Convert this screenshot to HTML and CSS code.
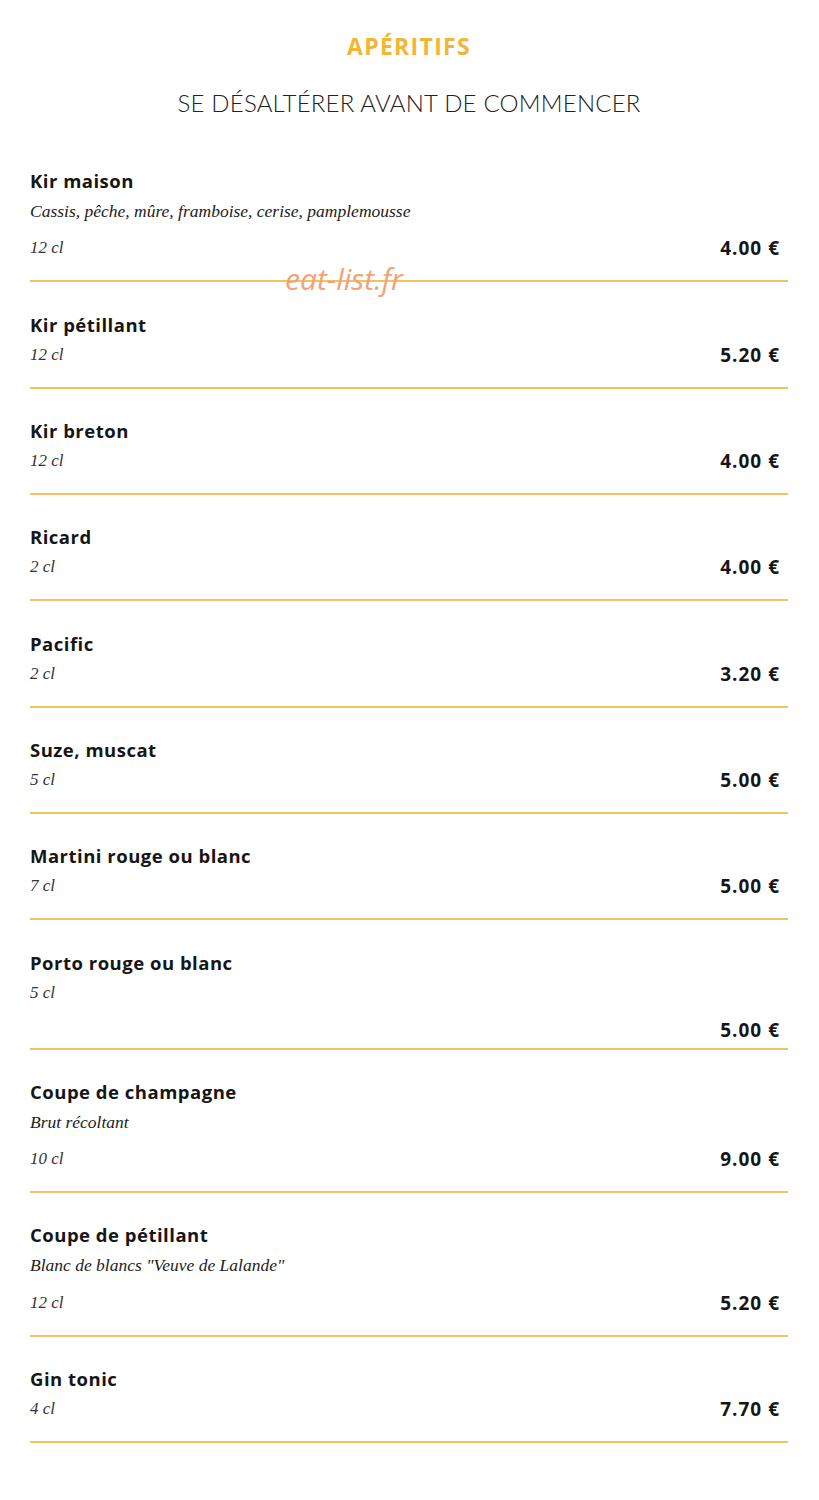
FILE: index.html
```html
<!DOCTYPE html>
<html lang="fr">
<head>
    <meta charset="UTF-8">
    <meta name="viewport" content="width=device-width, initial-scale=1.0">
    <title>Apéritifs</title>
    <link rel="stylesheet" href="styles.css">
</head>
<body>

<div class="menu">
    <div class="menu-header">
        <h1 class="menu-title">APÉRITIFS</h1>
        <h2 class="menu-subtitle">SE DÉSALTÉRER AVANT DE COMMENCER</h2>
    </div>

    <div class="item">
        <div class="item-name">Kir maison</div>
        <div class="item-desc">Cassis, pêche, mûre, framboise, cerise, pamplemousse</div>
        <div class="item-row">
            <span class="item-vol">12 cl</span>
            <span class="item-price">4.00 €</span>
        </div>
        <div class="watermark">eat-list.fr</div>
    </div>

    <div class="item">
        <div class="item-name">Kir pétillant</div>
        <div class="item-row">
            <span class="item-vol">12 cl</span>
            <span class="item-price">5.20 €</span>
        </div>
    </div>

    <div class="item">
        <div class="item-name">Kir breton</div>
        <div class="item-row">
            <span class="item-vol">12 cl</span>
            <span class="item-price">4.00 €</span>
        </div>
    </div>

    <div class="item">
        <div class="item-name">Ricard</div>
        <div class="item-row">
            <span class="item-vol">2 cl</span>
            <span class="item-price">4.00 €</span>
        </div>
    </div>

    <div class="item">
        <div class="item-name">Pacific</div>
        <div class="item-row">
            <span class="item-vol">2 cl</span>
            <span class="item-price">3.20 €</span>
        </div>
    </div>

    <div class="item">
        <div class="item-name">Suze, muscat</div>
        <div class="item-row">
            <span class="item-vol">5 cl</span>
            <span class="item-price">5.00 €</span>
        </div>
    </div>

    <div class="item">
        <div class="item-name">Martini rouge ou blanc</div>
        <div class="item-row">
            <span class="item-vol">7 cl</span>
            <span class="item-price">5.00 €</span>
        </div>
    </div>

    <div class="item item-stacked">
        <div class="item-name">Porto rouge ou blanc</div>
        <div class="item-row">
            <span class="item-vol">5 cl</span>
        </div>
        <div class="item-row item-row-price">
            <span class="item-price">5.00 €</span>
        </div>
    </div>

    <div class="item">
        <div class="item-name">Coupe de champagne</div>
        <div class="item-desc">Brut récoltant</div>
        <div class="item-row">
            <span class="item-vol">10 cl</span>
            <span class="item-price">9.00 €</span>
        </div>
    </div>

    <div class="item">
        <div class="item-name">Coupe de pétillant</div>
        <div class="item-desc">Blanc de blancs "Veuve de Lalande"</div>
        <div class="item-row">
            <span class="item-vol">12 cl</span>
            <span class="item-price">5.20 €</span>
        </div>
    </div>

    <div class="item">
        <div class="item-name">Gin tonic</div>
        <div class="item-row">
            <span class="item-vol">4 cl</span>
            <span class="item-price">7.70 €</span>
        </div>
    </div>
</div>

</body>
</html>
```

FILE: styles.css
```css
body {
    font-family: 'Open Sans', 'Liberation Sans', sans-serif;
    background-color: #ffffff;
    color: #161616;
    margin: 0;
}
.menu {
    width: 758px;
    margin-left: 30px;
}
.menu-header {
    padding-top: 31px;
    text-align: center;
}
.menu-title {
    margin: 0;
    font-size: 23px;
    line-height: 30px;
    font-weight: 700;
    letter-spacing: 1.3px;
    color: #f2b535;
}
.menu-subtitle {
    margin: 27px 0 21px;
    font-family: 'Lato', sans-serif;
    font-size: 24px;
    line-height: 30px;
    font-weight: 300;
    letter-spacing: 0.2px;
    color: #222222;
}
.item {
    position: relative;
    padding: 29.3px 0 21px;
    border-bottom: 2px solid #f3c25c;
}
.item-stacked {
    padding-bottom: 7px;
}
.item-name {
    font-size: 18.5px;
    line-height: 26px;
    font-weight: 700;
    letter-spacing: 0.5px;
}
.item-desc {
    margin-top: 6px;
    margin-bottom: 15.2px;
    font-family: 'Liberation Serif', serif;
    font-style: italic;
    font-size: 17.5px;
    line-height: 22px;
    color: #222222;
}
.item-row {
    margin-top: 6px;
    display: flex;
    justify-content: space-between;
    align-items: center;
    height: 22px;
}
.item-row-price {
    margin-top: 15px;
    justify-content: flex-end;
}
.item-vol {
    font-family: 'Liberation Serif', serif;
    font-style: italic;
    font-size: 17px;
    line-height: 22px;
    color: #333333;
}
.item-price {
    padding-right: 8px;
    font-size: 19px;
    line-height: 22px;
    font-weight: 700;
    letter-spacing: 1px;
}
.watermark {
    position: absolute;
    left: 255px;
    bottom: -17px;
    font-family: 'Open Sans', sans-serif;
    font-style: italic;
    font-size: 30px;
    line-height: 36px;
    color: #f3a278;
}
```
